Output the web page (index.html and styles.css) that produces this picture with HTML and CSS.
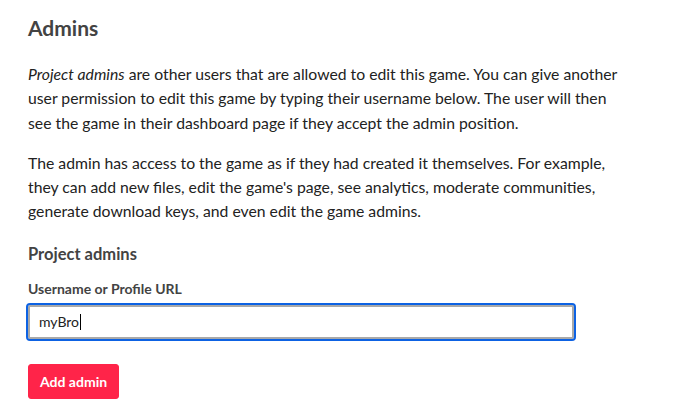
FILE: index.html
```html
<!DOCTYPE html>
<html>
<head>
<meta charset="utf-8">
<link rel="stylesheet" href="styles.css">
</head>
<body>
<div class="page">
  <h2 class="title">Admins</h2>
  <p class="text"><em>Project admins</em> are other users that are allowed to edit this game. You can give another user permission to edit this game by typing their username below. The user will then see the game in their dashboard page if they accept the admin position.</p>
  <p class="text">The admin has access to the game as if they had created it themselves. For example, they can add new files, edit the game's page, see analytics, moderate communities, generate download keys, and even edit the game admins.</p>
  <h3 class="subtitle">Project admins</h3>
  <form class="admin_form">
    <label class="label">Username or Profile URL</label>
    <div class="input_wrap"><span class="input_text">myBro</span><span class="caret"></span></div>
    <div class="buttons"><button type="button" class="button">Add admin</button></div>
  </form>
</div>
</body>
</html>
```

FILE: styles.css
```css
html, body {
  margin: 0;
  padding: 0;
  background: #ffffff;
}
body {
  font-family: Lato, "Open Sans", sans-serif;
  color: #222222;
}
.page {
  padding: 14px 28px 0 28px;
  width: 600px;
}
.title {
  font-size: 21px;
  font-weight: 700;
  color: #434343;
  margin: 0 0 20px 0;
  line-height: 28px;
}
.text {
  font-size: 15.75px;
  line-height: 24.3px;
  margin: 0 0 16px 0;
}
.subtitle {
  font-size: 16.5px;
  font-weight: 700;
  color: #434343;
  margin: 19px 0 14px 0;
  line-height: 22px;
}
.admin_form {
  display: flex;
  flex-direction: column;
}
.label {
  font-size: 14px;
  font-weight: 700;
  color: #434343;
  line-height: 20px;
  margin-bottom: 6px;
}
.input_wrap {
  width: 533px;
  height: 30px;
  border: 2px solid #a9a9a9;
  border-radius: 2px;
  outline: 2px solid #0d62e3;
  outline-offset: 0;
  display: flex;
  align-items: center;
  padding-left: 9px;
  font-size: 14px;
  color: #222;
  box-sizing: content-box;
}
.caret {
  display: inline-block;
  width: 1px;
  height: 16px;
  background: #000;
  margin-left: 1px;
}
.buttons {
  margin-top: 25px;
}
.button {
  font-family: Lato, "Open Sans", sans-serif;
  background: #ff2449;
  color: #ffffff;
  border: 1px solid #ff2449;
  border-radius: 3px;
  font-size: 14px;
  font-weight: 700;
  height: 35px;
  padding: 0 11px;
  cursor: pointer;
}
```
